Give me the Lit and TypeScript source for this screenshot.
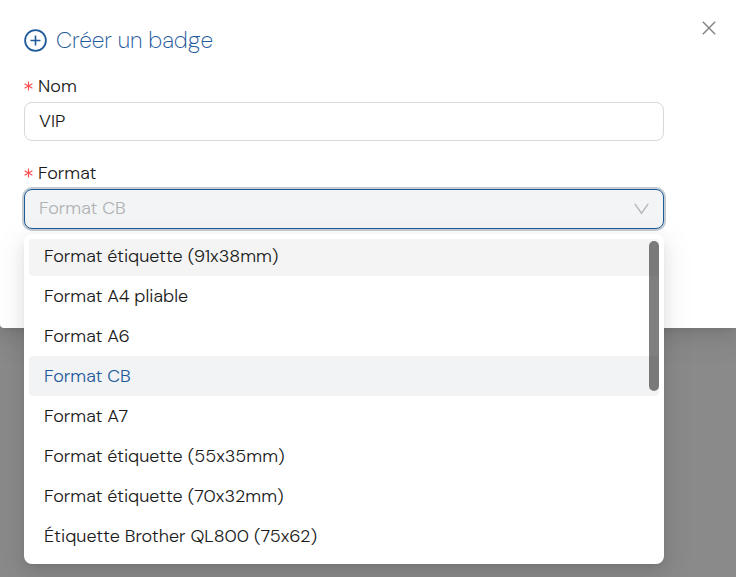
import { LitElement, html, css, svg } from "lit";
import { customElement, state } from "lit/decorators.js";
import { classMap } from "lit/directives/class-map.js";

const FORMATS = [
  "Format étiquette (91x38mm)",
  "Format A4 pliable",
  "Format A6",
  "Format CB",
  "Format A7",
  "Format étiquette (55x35mm)",
  "Format étiquette (70x32mm)",
  "Étiquette Brother QL800 (75x62)",
];

const star = svg`<path d="M4.5 0.5V9.5M0.6 2.7L8.4 7.3M8.4 2.7L0.6 7.3" stroke-width="1.1" />`;

@customElement("app-root")
export class AppRoot extends LitElement {
  @state() private selected = "Format CB";
  @state() private active = FORMATS[0];

  static styles = css`
    :host {
      display: block;
      min-height: 100vh;
      background: #8a8a8a;
      color: #1a1a1a;
      font: 300 18px/24px "DM Sans", Inter, "Liberation Sans", sans-serif;
    }
    * {
      box-sizing: border-box;
    }
    .modal {
      position: relative;
      display: flex;
      flex-direction: column;
      padding: 24px 72px 99px 24px;
      background: #fff;
      border-radius: 0 0 0 4px;
      box-shadow: 0 6px 16px rgba(0, 0, 0, 0.08), 0 3px 6px -4px rgba(0, 0, 0, 0.12),
        0 9px 28px 8px rgba(0, 0, 0, 0.05);
    }
    .close {
      position: absolute;
      top: 17px;
      right: 16px;
      display: grid;
      place-items: center;
      width: 22px;
      height: 22px;
      padding: 0;
      border: 0;
      background: none;
      color: #858585;
      cursor: pointer;
    }
    svg {
      display: block;
      fill: none;
      stroke: currentColor;
    }
    h1 {
      display: flex;
      align-items: center;
      gap: 9px;
      margin: 0 0 18px;
      color: #1f5a9b;
      font-size: 23px;
      line-height: 32px;
      font-weight: 200;
    }
    .field {
      display: flex;
      flex-direction: column;
      gap: 4px;
    }
    .field + .field {
      margin-top: 20px;
    }
    label {
      display: flex;
      align-items: center;
      gap: 5px;
    }
    .star {
      color: #ff4d4f;
    }
    input,
    select {
      width: 100%;
      height: 39px;
      padding: 0 14px 2px;
      border: 1px solid #d9d9d9;
      border-radius: 8px;
      background: #fff;
      color: inherit;
      font: inherit;
      outline: 0;
    }
    .picker {
      position: relative;
    }
    select {
      display: block;
      appearance: none;
      height: 40px;
      border-color: #1f5a9b;
      background: #f2f4f6;
      box-shadow: 0 0 0 2px #c5cdd3;
      color: #b0b2b3;
    }
    .arrow {
      position: absolute;
      top: 14px;
      right: 15px;
      color: #b5b7b8;
      pointer-events: none;
    }
    .menu {
      position: absolute;
      top: 100%;
      left: 0;
      right: 0;
      margin-top: 5px;
      padding: 5px;
      border-radius: 8px;
      background: #fff;
      box-shadow: 0 6px 16px rgba(0, 0, 0, 0.08), 0 3px 6px -4px rgba(0, 0, 0, 0.12),
        0 9px 28px 8px rgba(0, 0, 0, 0.05);
    }
    .viewport {
      height: 320px;
      overflow: hidden;
    }
    .list {
      display: flex;
      flex-direction: column;
      margin-top: -3px;
    }
    .option {
      height: 40px;
      padding: 0 15px;
      border: 0;
      border-radius: 4px;
      background: none;
      color: inherit;
      font: inherit;
      text-align: left;
      cursor: pointer;
    }
    .active {
      background: #f4f4f4;
    }
    .selected {
      background: #f2f3f5;
      color: #1f5a9b;
    }
    .thumb {
      position: absolute;
      top: 7px;
      right: 5px;
      width: 10px;
      height: 150px;
      border-radius: 5px;
      background: rgba(0, 0, 0, 0.5);
    }
  `;

  private star() {
    return html`<svg class="star" width="9" height="10" viewBox="0 0 9 10" aria-hidden="true">${star}</svg>`;
  }

  render() {
    return html`
      <section class="modal" role="dialog" aria-labelledby="title">
        <button class="close" aria-label="Fermer">
          <svg width="14" height="14" viewBox="0 0 14 14" stroke-width="1.5"><path d="M0.8 0.8L13.2 13.2M13.2 0.8L0.8 13.2" /></svg>
        </button>
        <h1 id="title">
          <svg width="23" height="23" viewBox="0 0 23 23" stroke-width="1.8" aria-hidden="true">
            <circle cx="11.5" cy="11.5" r="10.4" />
            <path d="M11.5 6.5V16.5M6.5 11.5H16.5" stroke-width="1.6" />
          </svg>
          Créer un badge
        </h1>
        <div class="field">
          <label for="nom">${this.star()}Nom</label>
          <input id="nom" type="text" value="VIP" />
        </div>
        <div class="field">
          <label for="format">${this.star()}Format</label>
          <div class="picker">
            <select id="format">
              ${FORMATS.map((f) => html`<option ?selected=${f === this.selected}>${f}</option>`)}
            </select>
            <svg class="arrow" width="15" height="12" viewBox="0 0 15 12" stroke-width="1.4"><path d="M0.8 0.8L7.5 10.2L14.2 0.8" /></svg>
            <div class="menu">
              <div class="viewport">
                <div class="list" role="listbox" aria-label="Format">
                  ${FORMATS.map(
                    (f) => html`<button
                      role="option"
                      aria-selected=${f === this.selected}
                      class=${classMap({ option: true, active: f === this.active, selected: f === this.selected })}
                      @mouseenter=${() => (this.active = f)}
                      @click=${() => (this.selected = f)}
                    >${f}</button>`
                  )}
                </div>
              </div>
              <div class="thumb"></div>
            </div>
          </div>
        </div>
      </section>
    `;
  }
}
